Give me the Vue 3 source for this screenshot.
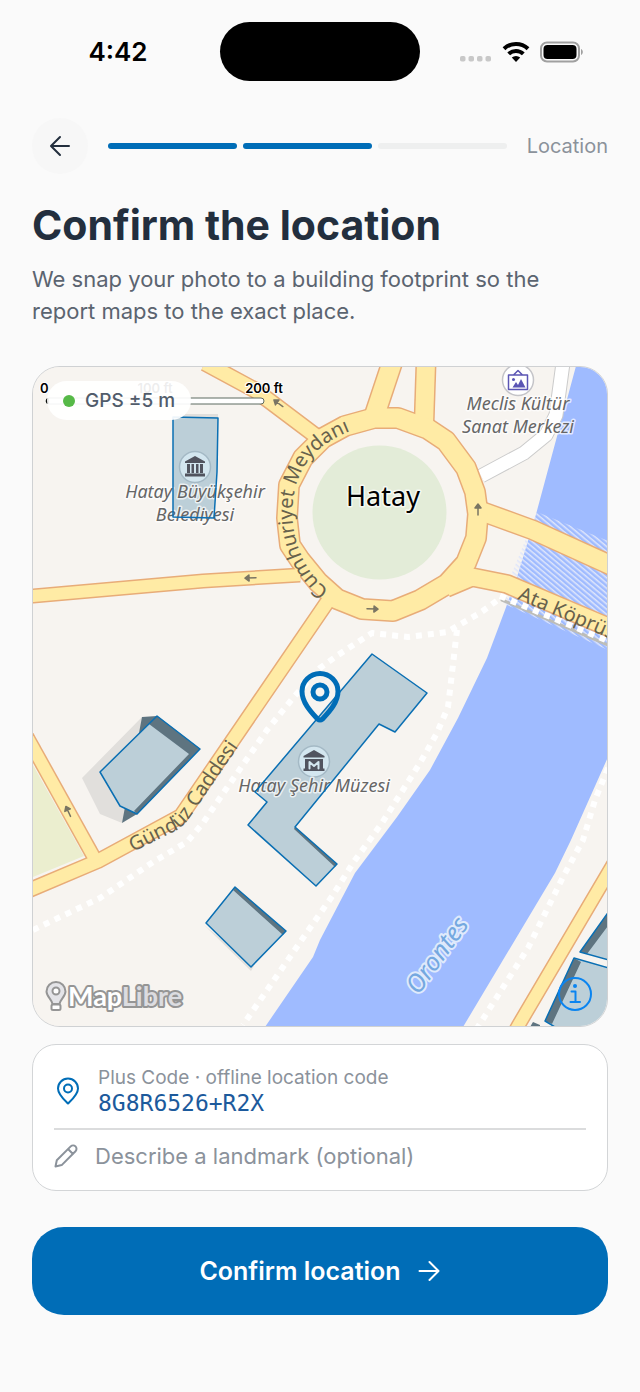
<template>
  <main class="screen">
    <div class="status-bar">
      <span class="status-bar__time">4:42</span>
      <span class="status-bar__island"></span>
      <span class="status-bar__icons">
        <svg class="icon-dots" viewBox="0 0 32 8" aria-hidden="true">
          <rect v-for="i in 4" :key="i" :x="(i - 1) * 8.5" y="1" width="5.5" height="5.5" rx="1.8" />
        </svg>
        <svg class="icon-wifi" viewBox="0 0 28 22" aria-hidden="true">
          <path d="M2 7.700a17.500 17.500 0 0 1 24 0" />
          <path d="M6.700 12.900a10.500 10.500 0 0 1 14.600 0" />
          <path class="solid" d="M14 21l-4.200-4.400a6.200 6.200 0 0 1 8.400 0z" />
        </svg>
        <svg class="icon-battery" viewBox="0 0 44 22" aria-hidden="true">
          <rect class="shell" x="1" y="1.5" width="38" height="19" rx="6" />
          <rect x="3.500" y="4" width="33" height="14" rx="4" />
          <path class="nub" d="M41 8c2.400 1 2.400 5 0 6z" />
        </svg>
      </span>
    </div>

    <header class="steps">
      <button class="steps__back" type="button" aria-label="Back">
        <svg viewBox="0 0 24 24" aria-hidden="true">
          <path d="M21 12H3.500M12 3l-9 9 9 9" />
        </svg>
      </button>
      <div class="steps__track">
        <span
          v-for="step in steps"
          :key="step.name"
          class="steps__bar"
          :class="{ 'steps__bar--done': step.done }"
        ></span>
      </div>
      <span class="steps__label">Location</span>
    </header>

    <h1 class="title">Confirm the location</h1>
    <p class="lead">We snap your photo to a building footprint so the report maps to the exact place.</p>

    <section class="map">
      <svg class="map__canvas" viewBox="33 367 574 659" preserveAspectRatio="xMidYMid slice">
        <defs>
          <pattern id="hatch" width="4" height="4" patternUnits="userSpaceOnUse" patternTransform="rotate(40)">
            <rect width="4" height="1.500" fill="#dfe6fb" />
          </pattern>
          <path id="ring-label" d="M329 590C290 562 279 496 311 457Q330 435 372 424" />
          <path id="bridge-label" d="M517 599L660 660" />
          <path id="street-label" d="M133 852L175 831Q183 827 190 817L262 712" />
          <path id="river-label" d="M401 1020L487 900" />
        </defs>

        <rect class="land" x="20" y="350" width="600" height="690" />
        <circle class="park" cx="379.500" cy="512.500" r="67" />
        <path class="plot" d="M33 765L84 856L33 877z" />
        <path
          class="water"
          d="M576 366L535 518L517 577L505 610L487 658L458 718L430 770L397 817L355 873L320 940L313 957L265 1027H463L555 873L571 840L608 757V366z"
        />
        <path fill="url(#hatch)" d="M537 512L608 541V650L500 602z" />

        <g class="footways">
          <path v-for="(d, i) in footways" :key="i" :d="d" />
        </g>

        <g class="lane">
          <path class="lane__casing" :d="lane" />
          <path class="lane__fill" :d="lane" />
        </g>
        <g class="roads roads--casing">
          <path v-for="(road, i) in roads" :key="i" :d="road.d" :stroke-width="road.width + 3" />
        </g>
        <g class="roads roads--fill">
          <path v-for="(road, i) in roads" :key="i" :d="road.d" :stroke-width="road.width" />
        </g>
        <path class="bridge-edge" d="M502 600L608 645" />
        <path class="bridge-walk" d="M500 596L608 641" />

        <path class="shade" d="M180 414H218V418H180zM142 717L82 778L100 814L122 823L160 740zM204 925L251 971L254 966z" />
        <path class="wall" d="M142 717L157 716L200 749L137 814L122 823z" />
        <g class="buildings">
          <path v-for="(d, i) in buildings" :key="i" :d="d" />
        </g>
        <path
          class="wall"
          d="M157 716L200 749L137 814L134 811L189 754L149 724zM295 827L337 864L335 867L294 829zM235 887L286 931L283 935L233 890zM607 914L580 952L587 954L608 926zM574 958L545 1021L552 1024L581 962z"
        />
        <path class="wall" d="M533 1022L540 1025L540 1027H530z" />

        <g class="arrows">
          <path
            v-for="(arrow, i) in arrows"
            :key="i"
            d="M-6 0H3M1 -3L5 0L1 3z"
            :transform="`translate(${arrow.x} ${arrow.y}) rotate(${arrow.angle})`"
          />
        </g>

        <g class="poi">
          <circle cx="195" cy="467" r="15.500" />
          <path class="poi__glyph" d="M185 461.500L195 456L205 461.500V463H185zM187 464h3v9h-3zM191.500 464h2.500v9h-2.500zM196 464h2.500v9h-2.500zM200 464h3v9h-3zM185 473.500h20v3h-20z" />
          <circle cx="314" cy="761.500" r="15.500" />
          <path class="poi__glyph" d="M303.500 756L314 750L324.500 756V757.500H303.500zM305 759H323V768.500H324.500V771H303.500V768.500H305z" />
          <path class="poi__mark" d="M309.500 768.500V762L314 766L318.500 762V768.500" />
          <circle class="poi__art-ring" cx="518" cy="380" r="15.500" />
          <path class="poi__art" d="M508.500 375H527.500V389.500H508.500zM514 374.500L518 370.500L522 374.500" />
          <path class="poi__art-fill" d="M512.500 387.500L516 382L518 385L521 379L525.500 387.500z" />
          <circle class="poi__art-fill" cx="513.500" cy="379.500" r="1.500" />
        </g>

        <g class="labels">
          <text class="label label--place" x="195" y="498">Hatay Büyükşehir</text>
          <text class="label label--place" x="195" y="521">Belediyesi</text>
          <text class="label label--place" x="518" y="410">Meclis Kültür</text>
          <text class="label label--place" x="518" y="433">Sanat Merkezi</text>
          <text class="label label--place" x="314" y="792">Hatay Şehir Müzesi</text>
          <text class="label label--city" x="383" y="506">Hatay</text>
          <text class="label label--street"><textPath href="#ring-label">Cumhuriyet Meydanı</textPath></text>
          <text class="label label--street"><textPath href="#bridge-label">Ata Köprüsü</textPath></text>
          <text class="label label--street"><textPath href="#street-label">Gündüz Caddesi</textPath></text>
          <text class="label label--river"><textPath href="#river-label" startOffset="50%">Orontes</textPath></text>
        </g>

        <g class="outlines">
          <path v-for="(d, i) in buildings" :key="i" :d="d" />
        </g>

        <g class="scale">
          <rect x="46" y="398" width="218" height="6" rx="3" />
          <path d="M49 398a3 3 0 0 0 0 6z" />
          <text x="40" y="393">0</text>
          <text x="155" y="393" text-anchor="middle">100 ft</text>
          <text x="264" y="393" text-anchor="middle">200 ft</text>
        </g>

        <g class="maplibre">
          <path d="M56 982a9.500 9.500 0 0 1 9.500 9.500c0 5-5 7.500-6 12.500h-7c-1-5-6-7.500-6-12.500a9.500 9.500 0 0 1 9.500-9.500z" />
          <circle cx="56" cy="991" r="3.500" />
          <rect x="51.500" y="1004.500" width="9" height="5.500" rx="1.500" />
          <text x="68" y="1006">Map<tspan>Libre</tspan></text>
        </g>
      </svg>

      <span class="gps">
        <span class="gps__dot"></span>
        GPS ±5 m
      </span>

      <svg class="map__pin" viewBox="0 0 44 54" aria-hidden="true">
        <path d="M19.500 49C14 43 4 33 4 21.500a18 18 0 0 1 36 0C40 33 30 43 24.500 49Q22 51 19.500 49z" />
        <circle cx="22" cy="22" r="7" />
      </svg>

      <button class="map__info" type="button" aria-label="Map information">
        <svg viewBox="0 0 36 36" aria-hidden="true">
          <circle cx="18" cy="18" r="16" />
          <path d="M14.500 15.500H18.500V26M13.500 26H23" />
          <circle class="dot" cx="18" cy="10" r="2" />
        </svg>
      </button>
    </section>

    <section class="details">
      <div class="details__code">
        <svg class="details__pin" viewBox="0 0 24 28" aria-hidden="true">
          <path d="M12 26.500C8 22.500 2 17.500 2 11.500a10 10 0 0 1 20 0C22 17.500 16 22.500 12 26.500z" />
          <circle cx="12" cy="11.500" r="4" />
        </svg>
        <div>
          <div class="details__caption">Plus Code · offline location code</div>
          <div class="details__value">8G8R6526+R2X</div>
        </div>
      </div>
      <div class="details__landmark">
        <label for="landmark" aria-label="Landmark">
          <svg class="details__pencil" viewBox="0 0 24 24" aria-hidden="true">
            <path d="M1.500 22.500l1.300-6.200L16.700 2.400a3.300 3.300 0 0 1 4.800 4.800L7.700 21.100zM14 5l5 5" />
          </svg>
        </label>
        <input id="landmark" v-model="landmark" type="text" placeholder="Describe a landmark (optional)" />
      </div>
    </section>

    <button class="confirm" type="button">
      Confirm location
      <svg viewBox="0 0 24 24" aria-hidden="true">
        <path d="M2.500 12H21M12.500 3l9 9-9 9" />
      </svg>
    </button>
  </main>
</template>

<script setup>
import { ref } from 'vue'

const landmark = ref('')

const steps = [
  { name: 'photo', done: true },
  { name: 'location', done: true },
  { name: 'report', done: false },
]

const roads = [
  { d: 'M205 363L255 390L316 436', width: 14 },
  { d: 'M392 363L375 414', width: 19 },
  { d: 'M426 363L424 424', width: 18 },
  { d: 'M478 510L533 530L608 564L625 572', width: 18 },
  { d: 'M446 588L472 577L507 584L608 627L625 634', width: 17 },
  { d: 'M20 597L33 596L203 581L300 575', width: 12 },
  { d: 'M330 598L181 816L98 861L20 894', width: 13 },
  { d: 'M26 735L96 861', width: 12 },
  { d: 'M630 836L518 1026L512 1037', width: 12 },
  {
    d: 'M374 418L398 418L428 429L446 441L466 468L475 492L478 514L476 538L466 563L447 584L420 600L393 611L362 609L337 599L318 582L300 560L290 545L287 518L289 485L303 458L323 438L345 426z',
    width: 19,
  },
]

const lane = 'M563 363L556 415L546 435L524 453L481 476'

const footways = [
  'M33 930L100 898L153 862L187 842L203 823L222 795L267 730L293 698L320 668L338 655L372 633L408 637L447 632L480 613L502 597',
  'M457 630L452 673L448 707L437 733L420 763L382 823L353 863L333 895L303 938L243 1025',
  'M608 768L595 800L583 840L563 877L528 948L476 1030',
]

const buildings = [
  'M173 417L218 418L217 472L214 518L173 517z',
  'M157 716L200 749L137 814L120 806L100 772z',
  'M372 654L427 693L395 732L379 724L295 827L337 864L316 886L248 825L267 802L255 792z',
  'M235 887L286 931L251 967L206 923z',
  'M612 907L580 952L612 961z',
  'M574 958L612 969V1030H560L545 1021z',
]

const arrows = [
  { x: 278, y: 403, angle: 216 },
  { x: 250, y: 578, angle: 178 },
  { x: 373, y: 609, angle: 2 },
  { x: 478, y: 509, angle: -90 },
  { x: 68, y: 811, angle: -115 },
]
</script>

<style>
body {
  margin: 0;
  background: #fafafa;
}
</style>

<style scoped>
.screen {
  box-sizing: border-box;
  padding: 0 32px 76px;
  font-family: Inter, "Liberation Sans", sans-serif;
  color: #232f3e;
}

svg {
  display: block;
  fill: none;
  stroke-linecap: round;
  stroke-linejoin: round;
}

button {
  padding: 0;
  border: 0;
  font: inherit;
  cursor: pointer;
}

.status-bar {
  display: grid;
  grid-template-columns: 1fr 200px 1fr;
  align-items: center;
  padding: 22px 0 37px;
}

.status-bar__time {
  justify-self: center;
  padding-right: 16px;
  font-size: 26px;
  font-weight: 600;
  color: #000;
}

.status-bar__island {
  height: 59px;
  border-radius: 30px;
  background: #000;
}

.status-bar__icons {
  display: flex;
  align-items: center;
  justify-content: flex-end;
  gap: 10px;
  padding-right: 24px;
}

.icon-dots {
  width: 32px;
  height: 8px;
  margin-top: 14px;
  fill: #c8c8c8;
}

.icon-wifi {
  width: 28px;
  height: 22px;
  stroke: #000;
  stroke-width: 4;
  stroke-linecap: butt;
}

.icon-wifi .solid {
  fill: #000;
  stroke: none;
}

.icon-battery {
  width: 44px;
  height: 22px;
  fill: #000;
}

.icon-battery .shell {
  fill: none;
  stroke: #a0a0a0;
  stroke-width: 2;
}

.icon-battery .nub {
  fill: #a0a0a0;
}

.steps {
  display: flex;
  align-items: center;
  gap: 20px;
}

.steps__back {
  display: grid;
  place-items: center;
  width: 56px;
  height: 56px;
  border-radius: 50%;
  background: #f7f7f7;
}

.steps__back svg {
  width: 24px;
  height: 24px;
  stroke: #232f3e;
  stroke-width: 2;
}

.steps__track {
  display: flex;
  flex: 1;
  gap: 6px;
}

.steps__bar {
  flex: 1;
  height: 6px;
  border-radius: 3px;
  background: #eeefef;
}

.steps__bar--done {
  background: #006db7;
}

.steps__label {
  font-size: 20px;
  color: #8b929b;
}

.title {
  margin: 26px 0 0;
  font-size: 41px;
  line-height: 50px;
  font-weight: 700;
}

.lead {
  margin: 13px 0 39px;
  font-size: 22px;
  line-height: 32px;
  color: #5b6470;
}

.map {
  position: relative;
  overflow: hidden;
  border: 1px solid #cfd1d3;
  border-radius: 28px;
  background: #f7f4f0;
}

.map__canvas {
  width: 100%;
  height: auto;
}

.land {
  fill: #f7f4f0;
}

.park {
  fill: #e3ecd8;
}

.plot {
  fill: #ebeecf;
}

.water {
  fill: #9fbbff;
}

.footways,
.bridge-walk {
  stroke: #fff;
  stroke-width: 6;
  stroke-dasharray: 6 6;
  stroke-linecap: butt;
}

.bridge-edge {
  stroke: #bdbdb8;
  stroke-width: 3;
}

.lane {
  stroke-linecap: butt;
}

.lane__casing {
  stroke: #cbcbcb;
  stroke-width: 15;
}

.lane__fill {
  stroke: #fff;
  stroke-width: 13;
}

.roads {
  stroke-linecap: butt;
}

.roads--casing {
  stroke: #e8ac78;
}

.roads--fill {
  stroke: #ffeba5;
}

.shade {
  fill: #e1dfdc;
}

.wall {
  fill: #5e7480;
}

.buildings {
  fill: #bccfd8;
}

.outlines {
  stroke: #0a6fb3;
  stroke-width: 1.5;
}

.arrows {
  fill: #7a7563;
  stroke: #7a7563;
  stroke-width: 1.5;
}

.poi circle {
  fill: #d3e6ef;
  stroke: #a4b9c5;
  stroke-width: 1.5;
}

.poi .poi__art-ring {
  fill: #fff;
  stroke: #c4c4c8;
}

.poi__glyph {
  fill: #51545f;
}

.poi__mark {
  stroke: #d3e6ef;
  stroke-width: 2;
}

.poi__art {
  stroke: #5b55b4;
  stroke-width: 1.5;
}

.poi .poi__art-fill {
  fill: #5b55b4;
  stroke: none;
}

.label {
  font-family: "Noto Sans", "Open Sans", sans-serif;
  stroke: rgba(255, 255, 255, 0.7);
  stroke-width: 3;
  paint-order: stroke;
}

.label--place {
  font-size: 18px;
  font-style: italic;
  text-anchor: middle;
  fill: #666;
}

.label--city {
  font-size: 27px;
  text-anchor: middle;
  fill: #000;
}

.label--street {
  font-size: 20px;
  fill: #67614c;
  stroke: none;
}

.label--river {
  font-size: 25px;
  font-style: italic;
  text-anchor: middle;
  fill: #74a8e0;
  stroke: #dfeafc;
  stroke-width: 4;
}

.scale {
  font-size: 13px;
  font-weight: 600;
}

.scale rect {
  fill: #fff;
  stroke: #5d6a60;
}

.scale path {
  fill: #000;
}

.scale text {
  fill: #000;
  stroke: #fff;
  stroke-width: 2;
  paint-order: stroke;
}

.maplibre {
  fill: #e4e4e8;
  stroke: #959595;
  stroke-width: 2;
}

.maplibre circle,
.maplibre rect {
  fill: #fff;
}

.maplibre text {
  font-family: Lato, sans-serif;
  font-size: 27px;
  font-weight: 700;
  fill: #fff;
  stroke-width: 4;
  paint-order: stroke;
}

.maplibre tspan {
  fill: #dcdce0;
}

.gps {
  position: absolute;
  top: 14px;
  left: 14px;
  display: flex;
  align-items: center;
  gap: 10px;
  padding: 0 16px;
  border-radius: 20px;
  background: rgba(255, 255, 255, 0.93);
  font-size: 19px;
  line-height: 39px;
  font-weight: 500;
  color: #515c6b;
}

.gps__dot {
  width: 12px;
  height: 12px;
  border-radius: 50%;
  background: #56b947;
}

.map__pin {
  position: absolute;
  top: 50%;
  left: 50%;
  width: 44px;
  height: 54px;
  transform: translate(-50%, -50%);
  stroke: #006db7;
  stroke-width: 5;
}

.map__info {
  position: absolute;
  right: 14px;
  bottom: 14px;
  background: none;
}

.map__info svg {
  width: 36px;
  height: 36px;
  stroke: #0a84f0;
  stroke-width: 2;
}

.map__info .dot {
  fill: #0a84f0;
  stroke: none;
}

.details {
  margin-top: 17px;
  padding: 20px 21px 8px;
  border: 1px solid #d3d5d7;
  border-radius: 24px;
  background: #fff;
}

.details__code {
  display: flex;
  align-items: center;
  gap: 18px;
  padding-bottom: 12px;
  border-bottom: 2px solid #dbdcdd;
}

.details__pin {
  width: 24px;
  height: 28px;
  margin-left: 2px;
  stroke: #006db7;
  stroke-width: 2;
}

.details__caption {
  font-size: 19px;
  line-height: 25px;
  color: #8b929b;
}

.details__value {
  font-family: "DejaVu Sans Mono", monospace;
  font-size: 23px;
  line-height: 26px;
  color: #1c5a9c;
}

.details__landmark {
  display: flex;
  align-items: center;
  gap: 17px;
}

.details__pencil {
  width: 24px;
  height: 24px;
  stroke: #8b929b;
  stroke-width: 2;
}

.details__landmark input {
  flex: 1;
  min-width: 0;
  height: 52px;
  padding: 0;
  border: 0;
  outline: 0;
  background: none;
  font: inherit;
  font-size: 22px;
  color: #232f3e;
}

.details__landmark input::placeholder {
  color: #8b929b;
  opacity: 1;
}

.confirm {
  display: flex;
  align-items: center;
  justify-content: center;
  gap: 16px;
  width: 100%;
  height: 88px;
  margin-top: 36px;
  border-radius: 32px;
  background: #006db7;
  color: #fff;
  font-size: 25px;
  font-weight: 600;
}

.confirm svg {
  width: 24px;
  height: 24px;
  stroke: #fff;
  stroke-width: 2;
}
</style>
